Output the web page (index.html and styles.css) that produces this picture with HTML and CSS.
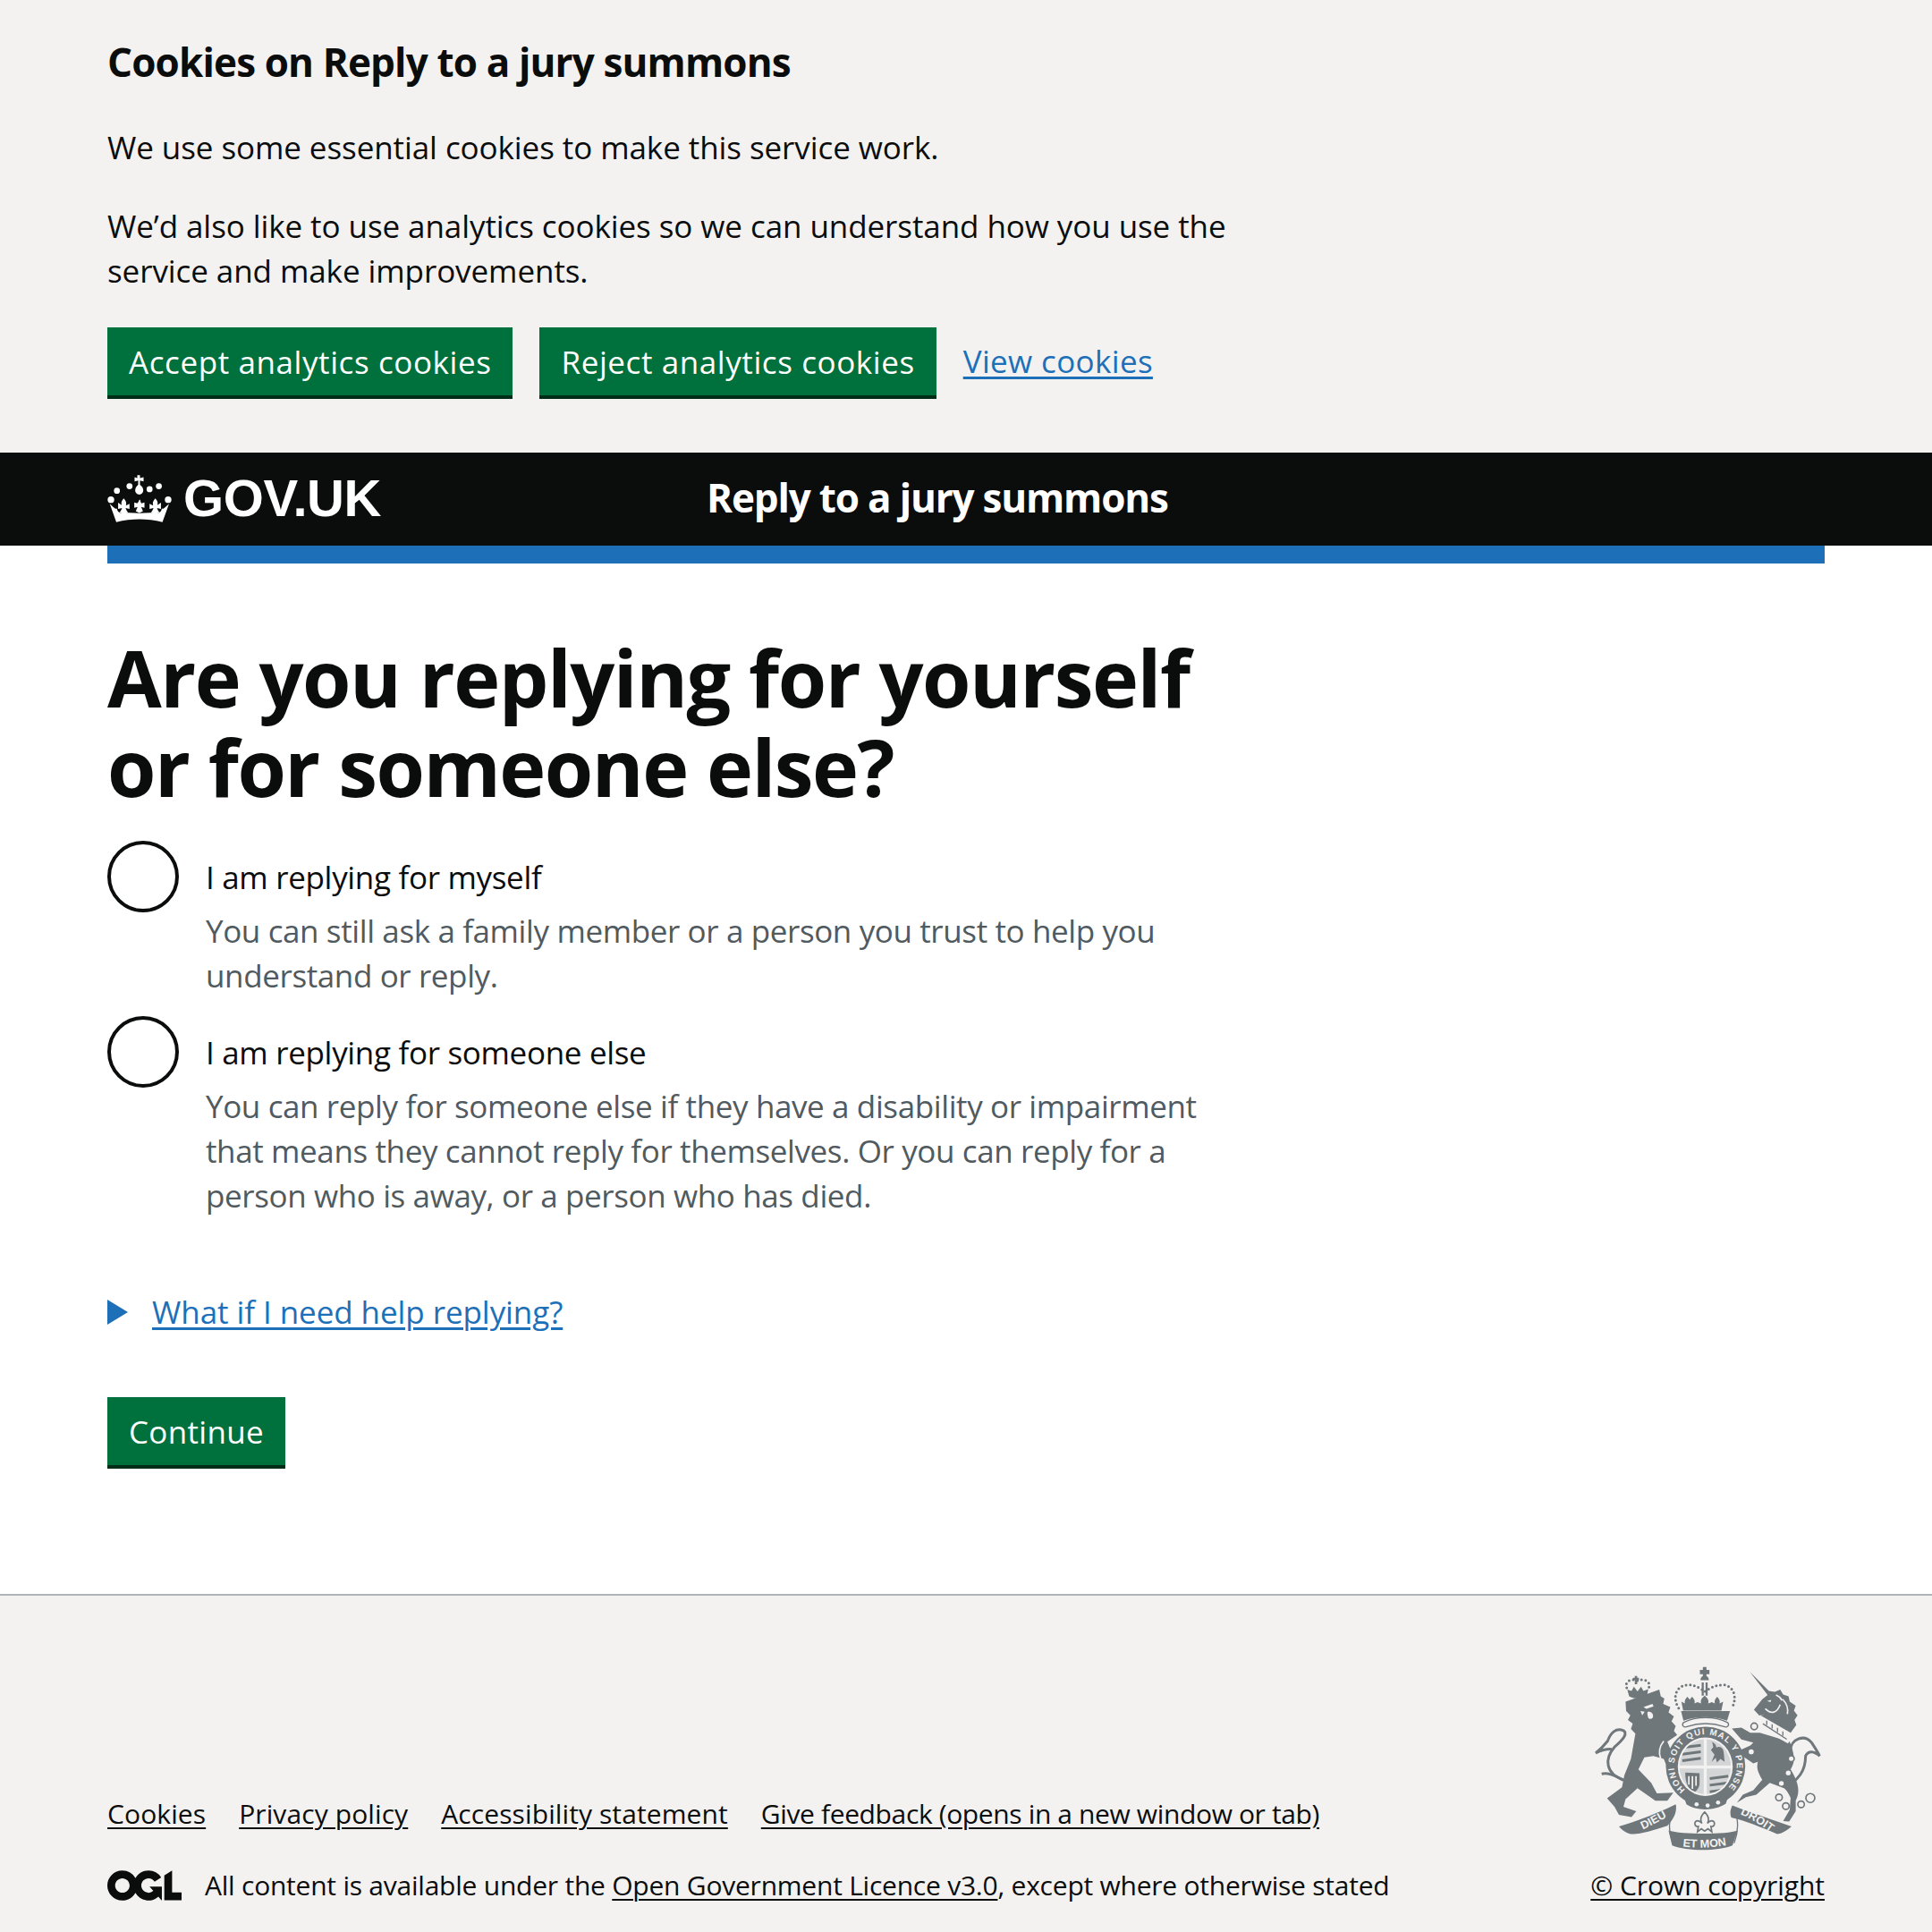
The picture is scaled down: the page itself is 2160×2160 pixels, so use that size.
FILE: index.html
```html
<!DOCTYPE html>
<html lang="en">
<head>
    <meta charset="UTF-8">
    <meta name="viewport" content="width=device-width, initial-scale=1.0">
    <title>Are you replying for yourself or for someone else? - Reply to a jury summons - GOV.UK</title>
    <link rel="stylesheet" href="styles.css">
</head>
<body>
    <div class="cookie-banner">
        <div class="container">
            <h2 class="cookie-title">Cookies on Reply to a jury summons</h2>
            <div class="cookie-text">
                <p>We use some essential cookies to make this service work.</p>
                <p>We’d also like to use analytics cookies so we can understand how you use the service and make improvements.</p>
            </div>
            <div class="button-group">
                <a class="button cookie-button" href="#">Accept analytics cookies</a>
                <a class="button cookie-button" href="#">Reject analytics cookies</a>
                <a class="link view-link" href="#">View cookies</a>
            </div>
        </div>
    </div>

    <header class="header">
        <div class="container header-row">
            <a class="logo" href="#">
                <svg class="crown" viewBox="0 0 215 157" aria-hidden="true">
                    <circle cx="12" cy="82" r="11"/>
                    <circle cx="32" cy="52" r="10"/>
                    <circle cx="74" cy="37" r="10"/>
                    <circle cx="141" cy="47" r="10"/>
                    <circle cx="172" cy="37" r="10"/>
                    <circle cx="203" cy="82" r="11"/>
                    <path d="M100 0h9v10l12-3v14l-12-3v14c8 6 11 12 11 19 0 8-6 14-13 14s-14-6-14-14c0-7 3-13 10-19V18l-12 3V7l9 3z"/>
                    <path d="M107 82h3c0 5 2 9 4 12l10-3v18l-11-3 6 14-12 6-12-6 6-14-11 3V91l10 3c3-3 5-7 7-12z"/>
                    <path d="M55 78c7 8 10 14 7 24l12-6v17l-13-3c2 6 4 10 8 14l-14 7-14-7c4-4 6-8 8-14l-13 3V92l12 8c-3-9 0-15 7-22z"/>
                    <path d="M160 78c7 7 10 13 7 22l12-8v21l-13-3c2 6 4 10 8 14l-14 7-14-7c4-4 6-8 8-14l-13 3V96l12 6c-3-10 0-16 7-24z"/>
                    <path d="M8 96l14 12c4 3 7 5 10 3 1 8 5 13 12 15l10-1 53 2 53-2 10 1c7-2 11-7 12-15 3 2 6 0 10-3l14-12-22 61c-25-8-52-10-77-10s-52 2-77 10z"/>
                </svg>
                <span class="logo-text">GOV.UK</span>
            </a>
            <a class="service-name" href="#">Reply to a jury summons</a>
        </div>
    </header>
    <div class="container">
        <div class="header-rule"></div>
    </div>

    <main class="container main">
        <form class="question">
            <h1 class="heading">Are you replying for yourself or for someone else?</h1>
            <div class="radios">
                <div class="radio-item">
                    <input class="radio" type="radio" name="who" id="who-1">
                    <div>
                        <label class="radio-label" for="who-1">I am replying for myself</label>
                        <div class="hint">You can still ask a family member or a person you trust to help you understand or reply.</div>
                    </div>
                </div>
                <div class="radio-item">
                    <input class="radio" type="radio" name="who" id="who-2">
                    <div>
                        <label class="radio-label" for="who-2">I am replying for someone else</label>
                        <div class="hint">You can reply for someone else if they have a disability or impairment that means they cannot reply for themselves. Or you can reply for a person who is away, or a person who has died.</div>
                    </div>
                </div>
            </div>
            <div class="details">
                <span class="details-arrow"></span>
                <a class="link details-link" href="#">What if I need help replying?</a>
            </div>
            <a class="button" href="#">Continue</a>
        </form>
    </main>

    <footer class="footer">
        <div class="container footer-row">
            <div class="footer-left">
                <ul class="footer-links">
                    <li><a href="#">Cookies</a></li>
                    <li><a href="#">Privacy policy</a></li>
                    <li><a href="#">Accessibility statement</a></li>
                    <li><a class="feedback-link" href="#">Give feedback (opens in a new window or tab)</a></li>
                </ul>
                <div class="licence">
                    <svg class="ogl" viewBox="0 0 483.2 195.7" aria-hidden="true">
                        <path d="M421.5 142.8V.1l-50.7 32.3v161.1h112.4v-50.7zm-122.3-9.6A47.12 47.12 0 0 1 221 97.8c0-26 21.1-47.1 47.1-47.1 16.7 0 31.4 8.7 39.7 21.8l42.7-27.2A97.63 97.63 0 0 0 268.1 0c-36.5 0-68.3 20.1-85.1 49.7A98 98 0 0 0 97.8 0C43.9 0 0 43.9 0 97.8s43.9 97.8 97.8 97.8c36.5 0 68.3-20.1 85.1-49.7a97.76 97.76 0 0 0 149.6 25.4l19.4 22.2h3v-87.8h-80l24.3 27.5zM97.8 145c-26 0-47.1-21.1-47.1-47.1s21.1-47.1 47.1-47.1 47.2 21 47.2 47S123.8 145 97.8 145"/>
                    </svg>
                    <span class="licence-text">All content is available under the <a href="#">Open Government Licence v3.0</a>, except where otherwise stated</span>
                </div>
            </div>
            <div class="footer-right">
                <svg class="crest" viewBox="60 40 770 620" aria-hidden="true">
                    <defs>
                        <path id="garter-arc" d="M372 453A105 105 0 1 1 508 453"/>
                        <path id="ribbon-left" d="M212 594C245 582 285 558 328 534"/>
                        <path id="ribbon-mid" d="M345 640C385 650 480 650 528 634"/>
                        <path id="ribbon-right" d="M548 532C590 548 630 574 664 600"/>
                        <clipPath id="shield-clip">
                            <ellipse cx="439" cy="376" rx="86" ry="92"/>
                        </clipPath>
                    </defs>

                    <!-- lion -->
                    <path d="M172 158L285 118L290 140L302 148L298 166L322 176L316 194L334 208L326 224L340 240L334 256L345 270L312 292L345 370L345 398L318 395L300 350L265 340L235 345L215 385L258 430L277 465L332 463L312 490L272 490L212 448L172 485L165 510L208 525L192 545L150 537L135 510L110 482L160 445L168 405L190 350L205 265L190 250L196 232L180 220L188 204L174 190Z"/>
                    <path d="M165 420C105 400 100 350 135 310C165 285 180 265 165 255C140 245 122 262 112 290C100 305 85 320 72 330C95 320 110 315 125 318" class="crest-line"/>
                    <path d="M92 400C110 395 140 405 165 422" class="crest-line"/>
                    <path d="M232 176l30-10 4 8-24 8zM246 192c12-2 20 6 18 18-2 6-12 8-16 2-2-6-4-14-2-20zM222 190l14 2-8 12z" class="crest-cut"/>
                    <path d="M300 290c-16 20-18 40-10 60" class="crest-cut-line"/>

                    <!-- lion crown -->
                    <path d="M176 112C168 88 192 80 212 88C232 80 258 88 250 112" class="crest-dots"/>
                    <path d="M203 72h8v6h6v8h-6v14h-8V86h-6v-8h6z"/>
                    <path d="M178 118l14 4 8-14 12 16 12-16 8 14 16-6-4 22c-20 12-42 12-60 2z"/>

                    <!-- unicorn -->
                    <path d="M588 58L652 122L672 125L690 118L700 134L718 140L722 158L742 172L736 188L748 204L738 220L744 236L725 262L625 205L640 200L620 205L602 185L630 150L648 136Z"/>
                    <path d="M528 248L560 245L590 262L622 262L722 292C740 340 740 360 725 385C760 440 752 470 742 490L742 525L720 560L700 558L722 520L725 480C710 450 705 448 695 445L655 430L610 470L575 478L545 497L565 470L600 455L630 420C610 385 612 375 615 360L600 365L570 345L545 325L590 305L600 295L560 285Z"/>
                    <path d="M622 220L726 284L716 298L612 240Z" class="crest-cut"/>
                    <path d="M632 232l80 52M645 222v14M663 234v14M681 246v14M699 258v14" class="crest-thin"/>
                    <path d="M640 182c20 20 40 14 50-14M698 150c14 14 20 30 16 50M676 136c10 4 16 10 20 18" class="crest-cut-line"/>
                    <path d="M646 156l14-4-2 8z" class="crest-cut"/>
                    <path d="M725 320C725 285 770 265 795 295C805 310 815 325 822 340C805 325 785 320 775 340C775 395 745 420 725 435" class="crest-line"/>
                    <circle cx="603" cy="241" r="11" class="crest-ring"/>
                    <circle cx="593" cy="326" r="11" class="crest-ring"/>
                    <circle cx="727" cy="349" r="10" class="crest-ring"/>
                    <circle cx="686" cy="479" r="11" class="crest-ring"/>
                    <circle cx="709" cy="508" r="11" class="crest-ring"/>
                    <circle cx="760" cy="502" r="11" class="crest-ring"/>
                    <circle cx="791" cy="481" r="15" class="crest-ring"/>
                    <circle cx="717" cy="397" r="8" class="crest-cut"/>
                    <circle cx="694" cy="432" r="8" class="crest-cut"/>

                    <!-- royal crown -->
                    <path d="M431 42h12v10h10v14h-10v6c6 4 8 8 8 14h-28c0-6 2-10 8-14v-6h-10V52h10z"/>
                    <path d="M350 180C325 140 345 100 385 102C410 104 425 115 437 125C450 115 470 104 495 102C530 100 550 140 528 180" class="crest-dots"/>
                    <path d="M427 94h7v44h-7zM440 94h7v44h-7z"/>
                    <path d="M395 142c8 8 10 14 8 22l10-4 12 4c-2-10 0-16 12-26 12 10 14 16 12 26l12-4 10 4c-2-8 0-14 8-22 8 8 10 14 8 22l12-6-6 30H365l-6-30 12 6c-2-8 0-14 8-22 4 4 6 6 8 10 2-4 4-6 8-10z"/>
                    <path d="M358 190H522L512 222C470 206 410 206 366 222Z"/>
                    <path d="M366 228C410 206 470 206 514 228C522 238 512 246 502 242C460 228 420 228 378 242C368 246 358 238 366 228Z" class="crest-ermine"/>

                    <!-- garter and shield -->
                    <circle cx="440" cy="375" r="133"/>
                    <text class="garter-text"><textPath href="#garter-arc" textLength="500">HONI SOIT QUI MAL Y PENSE</textPath></text>
                    <ellipse cx="439" cy="376" rx="92" ry="98" class="crest-shield"/>
                    <g clip-path="url(#shield-clip)">
                        <rect x="350" y="280" width="84" height="92" class="crest-quarter"/>
                        <rect x="444" y="280" width="84" height="92" class="crest-quarter"/>
                        <rect x="350" y="382" width="84" height="92" class="crest-quarter"/>
                        <rect x="444" y="382" width="84" height="92" class="crest-quarter"/>
                        <path d="M362 312l62-8M362 334l62-8M362 356l62-8M454 416l62-8M454 438l62-8M454 460l62-8" class="crest-stripe"/>
                        <path d="M462 292c12 8 14 14 14 20 10-6 22 0 24 12 2 12 2 22 4 36l-14-10-12 12-4-16-14 14 10-24-12-16 8-10z"/>
                        <path d="M372 396l48 2v34c0 14-10 26-20 32c-18-12-28-34-28-68z"/>
                        <path d="M384 408v28M396 408v42M408 408v32" class="crest-cut-line"/>
                    </g>
                    <path d="M362 462C400 500 480 500 520 462L508 500C470 525 410 525 376 502Z"/>
                    <circle cx="410" cy="502" r="7" class="crest-cut"/>
                    <circle cx="447" cy="506" r="7" class="crest-cut"/>
                    <circle cx="482" cy="496" r="7" class="crest-cut"/>

                    <!-- fleur -->
                    <path d="M437 528c14 14 16 26 9 38c9-12 22-12 24 0c0 8-6 12-12 10l3 18-13-10-11 8-11-8-13 10 3-18c-6 2-12-2-12-10c2-12 15-12 24 0c-7-12-5-24 9-38z" class="crest-fleur"/>

                    <!-- motto -->
                    <path d="M150 576C200 562 280 532 340 502C346 530 332 552 312 574C260 590 214 606 186 601C170 596 158 586 150 576Z"/>
                    <path d="M316 590C360 604 510 604 548 590L530 640C480 660 380 660 328 640Z"/>
                    <path d="M530 506C590 530 660 552 728 576C712 590 696 600 680 602C630 580 570 556 526 546C520 530 524 518 530 506Z"/>
                    <path d="M340 506C310 550 318 600 330 630M530 508C556 550 548 600 536 632" class="crest-thin"/>
                    <text class="motto-text"><textPath href="#ribbon-left" startOffset="50%" text-anchor="middle">DIEU</textPath></text>
                    <text class="motto-text"><textPath href="#ribbon-mid" startOffset="50%" text-anchor="middle">ET MON</textPath></text>
                    <text class="motto-text"><textPath href="#ribbon-right" startOffset="50%" text-anchor="middle">DROIT</textPath></text>
                </svg>
                <a class="crown-copyright" href="#">© Crown copyright</a>
            </div>
        </div>
    </footer>
</body>
</html>
```

FILE: styles.css
```css
* {
    box-sizing: border-box;
}

body {
    margin: 0;
    font-family: 'Open Sans', sans-serif;
    font-size: 35px;
    line-height: 50px;
    color: #0b0c0c;
    background-color: white;
}

.container {
    width: 1920px;
    margin: 0 auto;
}

p {
    margin: 0;
}

.link {
    color: #1d70b8;
    text-decoration-thickness: 3px;
    text-underline-offset: 4px;
}

/* cookie banner */
.cookie-banner {
    background-color: #f3f2f1;
    padding: 39px 0 64px;
}

.cookie-title {
    margin: 0 0 41px;
    font-size: 44px;
    line-height: 60px;
    font-weight: bold;
    letter-spacing: -0.85px;
}

.cookie-text {
    width: 1280px;
    letter-spacing: -0.08px;
}

.cookie-text p {
    margin-bottom: 38px;
}

.button-group {
    display: flex;
    align-items: center;
    gap: 30px;
}

.button {
    display: inline-block;
    height: 76px;
    padding: 14px 24px 0;
    background-color: #00703c;
    box-shadow: 0 4px 0 #002d18;
    color: white;
    text-decoration: none;
    letter-spacing: 0.3px;
}

.cookie-button {
    letter-spacing: 0.59px;
}

.view-link {
    letter-spacing: 0.35px;
}

/* header */
.header {
    background-color: #0b0c0c;
    height: 104px;
}

.header-row {
    display: flex;
    align-items: center;
    height: 104px;
}

.logo {
    width: 670px;
    display: flex;
    align-items: center;
    gap: 13px;
    padding-bottom: 2px;
    color: white;
    text-decoration: none;
}

.crown {
    width: 72px;
    height: 53px;
    fill: white;
}

.logo-text {
    font-family: 'Liberation Sans', Arial, sans-serif;
    font-size: 58px;
    font-weight: bold;
    letter-spacing: -0.4px;
}

.service-name {
    padding-bottom: 5px;
    font-size: 44px;
    font-weight: bold;
    letter-spacing: -1.17px;
    color: white;
    text-decoration: none;
}

.header-rule {
    height: 20px;
    background-color: #1d70b8;
}

/* main */
.main {
    padding: 77px 0 144px;
}

.question {
    width: 1280px;
}

.heading {
    margin: 0 0 33px;
    font-size: 88px;
    line-height: 100px;
    font-weight: bold;
    letter-spacing: -1.5px;
}

.radio-item {
    display: flex;
    gap: 30px;
    margin-bottom: 20px;
}

.radio {
    appearance: none;
    flex: none;
    width: 80px;
    height: 80px;
    margin: 0;
    border: 4px solid #0b0c0c;
    border-radius: 50%;
    background-color: white;
}

.radio-label {
    display: block;
    padding-top: 16px;
    margin-bottom: 10px;
    letter-spacing: -0.32px;
}

.hint {
    color: #505a5f;
    letter-spacing: -0.385px;
}

.details {
    display: flex;
    align-items: center;
    margin: 80px 0 70px;
}

.details-arrow {
    width: 0;
    height: 0;
    margin-right: 27px;
    border-style: solid;
    border-width: 14px 0 14px 23px;
    border-color: transparent transparent transparent #1d70b8;
}

.details-link {
    letter-spacing: -0.07px;
}

/* footer */
.footer {
    background-color: #f3f2f1;
    border-top: 2px solid #b1b4b6;
    padding: 79px 0 33px;
    font-size: 30px;
    line-height: 40px;
}

.footer a {
    color: #0b0c0c;
    text-decoration-thickness: 2px;
    text-underline-offset: 4px;
}

.footer-row {
    display: flex;
    justify-content: space-between;
    align-items: flex-end;
}

.footer-links {
    display: flex;
    gap: 37px;
    margin: 0 0 40px;
    padding: 0;
    list-style: none;
    letter-spacing: 0.1px;
}

.footer-links .feedback-link {
    letter-spacing: -0.37px;
}

.licence {
    display: flex;
    align-items: center;
    gap: 26px;
}

.licence-text {
    letter-spacing: -0.23px;
}

.ogl {
    width: 83px;
    height: 34px;
    fill: #0b0c0c;
}

.footer-right {
    display: flex;
    flex-direction: column;
    align-items: flex-end;
    gap: 18px;
}

.crown-copyright {
    letter-spacing: -0.04px;
}

.crest {
    width: 257px;
    height: 207px;
    fill: #6f777b;
    margin-right: 3px;
}

.crest-line {
    fill: none;
    stroke: #6f777b;
    stroke-width: 9;
}

.crest-cut {
    fill: #f3f2f1;
}

.crest-cut-line {
    fill: none;
    stroke: #f3f2f1;
    stroke-width: 5;
}

.crest-thin {
    fill: none;
    stroke: #6f777b;
    stroke-width: 4;
}

.crest-ring {
    fill: #f3f2f1;
    stroke: #6f777b;
    stroke-width: 5;
}

.crest-dots {
    fill: none;
    stroke: #6f777b;
    stroke-width: 9;
    stroke-linecap: round;
    stroke-dasharray: 0 14;
}

.crest-ermine {
    fill: #f3f2f1;
    stroke: #6f777b;
    stroke-width: 4;
}

.crest-shield {
    fill: #f3f2f1;
}

.crest-quarter {
    fill: #d3d5d6;
}

.crest-stripe {
    fill: none;
    stroke: #6f777b;
    stroke-width: 9;
}

.crest-fleur {
    fill: #f3f2f1;
    stroke: #6f777b;
    stroke-width: 5;
}

.garter-text {
    font-family: 'Liberation Sans', Arial, sans-serif;
    font-size: 29px;
    font-weight: bold;
    fill: #f3f2f1;
}

.motto-text {
    font-family: 'Liberation Sans', Arial, sans-serif;
    font-size: 38px;
    font-weight: bold;
    fill: #f3f2f1;
}
```
